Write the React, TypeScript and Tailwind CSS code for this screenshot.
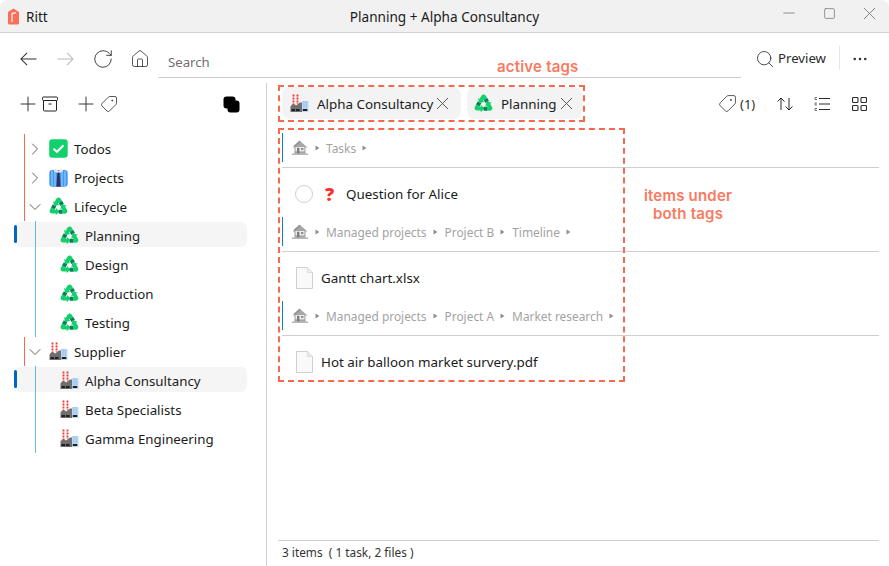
import React, { JSX } from 'react';
import { ChevronDown, ChevronRight, Ellipsis, House, Minus, Plus, RotateCw, Search, Square, Tag, X } from 'lucide-react';

const FONT = '[font-family:"Noto_Sans",sans-serif]';

const RecycleIcon = ({ size = 19 }: { size?: number }): JSX.Element => {
  const arm = (
    <g>
      <path d="M4.5 13L6.3 9.9" stroke="#0c7a5d" strokeWidth="3.8" fill="none" />
      <path d="M4.8 12.6L3.4 15Q3 15.8 4 15.8H7.8" stroke="#12d16c" strokeWidth="3.6" fill="none" strokeLinejoin="round" />
      <path d="M7.4 12.2V19.4L11 15.8Z" fill="#12d16c" />
    </g>
  );
  return (
    <svg width={size} height={size} viewBox="1 2 18 18" className="shrink-0">
      {arm}
      <g transform="rotate(120 10 11.83)">{arm}</g>
      <g transform="rotate(240 10 11.83)">{arm}</g>
    </svg>
  );
};

const FactoryIcon = (): JSX.Element => (
  <svg width="19" height="19" viewBox="0 0 19 19" className="shrink-0">
    <path d="M3.5 0.5V11M7.5 0.5V10" stroke="#f8312f" strokeWidth="1.8" strokeDasharray="2 1" fill="none" />
    <path d="M0.5 18V12.5L2 10.5H5L6 11.5L10 8.5L12 8.5V18Z" fill="#6f6f6f" />
    <rect x="12" y="7" width="6.5" height="11" fill="#bcd8f5" />
    <path d="M14 7V14M16.3 7V14" stroke="#8fbbe8" strokeWidth="0.8" />
    <rect x="1.5" y="15" width="3.5" height="2" fill="#1f1f1f" />
    <rect x="6" y="15" width="3.5" height="2" fill="#1f1f1f" />
    <rect x="12.8" y="15" width="4.5" height="2" fill="#1f1f1f" />
  </svg>
);

const CheckIcon = (): JSX.Element => (
  <svg width="19" height="19" viewBox="0 0 19 19" className="shrink-0">
    <rect width="18.5" height="18.5" x="0.2" y="0.2" rx="3" fill="#12d16c" />
    <path d="M4.5 9.8L8 12.8L14.5 6.2" stroke="#fff" strokeWidth="2" fill="none" />
  </svg>
);

const ShirtIcon = (): JSX.Element => (
  <svg width="19" height="19" viewBox="0 0 19 19" className="shrink-0">
    <rect x="0.3" y="2" width="18.4" height="16.8" rx="3" fill="#3f9bf2" />
    <path d="M3 3V18M6 3V18M13 3V18M16 3V18" stroke="#a5d0f8" strokeWidth="1" />
    <path d="M5.5 0.5L9.5 3L13.5 0.5L14 3.5L9.5 5.5L5 3.5Z" fill="#e4e4e8" />
    <path d="M8.4 4.5H10.6L11.6 18.8H7.4Z" fill="#35305f" />
  </svg>
);

const GrayHouse = (): JSX.Element => (
  <svg width="16" height="15" viewBox="0 0 16 15" className="shrink-0">
    <path d="M0.5 7.5L8 1L15.5 7.5H13.5V14H2.5V7.5Z" fill="#a6a6a6" />
    <path d="M8 1L2 6.5" stroke="#8a8a8a" strokeWidth="1.2" />
    <rect x="3.6" y="7" width="8.8" height="4.4" fill="#ececec" />
    <rect x="5" y="7.8" width="2.4" height="6.2" fill="#7e7e7e" />
    <rect x="9" y="8" width="2.4" height="2" fill="#8f8f8f" />
    <rect x="0" y="13.4" width="16" height="1.6" fill="#b8b8b8" />
  </svg>
);

const FileIcon = (): JSX.Element => (
  <svg width="17" height="22" viewBox="0 0 17 22" className="shrink-0">
    <path d="M0.5 0.5H11.5L16.5 5.5V21.5H0.5Z" fill="#f9f9f9" stroke="#cfcfcf" />
    <path d="M11.5 0.5V5.5H16.5" fill="#ececec" stroke="#dcdcdc" />
  </svg>
);

const Caret = (): JSX.Element => (
  <svg width="5" height="6" viewBox="0 0 5 6" className="shrink-0">
    <path d="M0.5 0.5L4.5 3L0.5 5.5Z" fill="#8f8f8f" />
  </svg>
);

type TreeRow = {
  label: string;
  icon: JSX.Element;
  child?: boolean;
  open?: boolean;
  active?: boolean;
};

const TREE: TreeRow[] = [
  { label: 'Todos', icon: <CheckIcon /> },
  { label: 'Projects', icon: <ShirtIcon /> },
  { label: 'Lifecycle', icon: <RecycleIcon />, open: true },
  { label: 'Planning', icon: <RecycleIcon />, child: true, active: true },
  { label: 'Design', icon: <RecycleIcon />, child: true },
  { label: 'Production', icon: <RecycleIcon />, child: true },
  { label: 'Testing', icon: <RecycleIcon />, child: true },
  { label: 'Supplier', icon: <FactoryIcon />, open: true },
  { label: 'Alpha Consultancy', icon: <FactoryIcon />, child: true, active: true },
  { label: 'Beta Specialists', icon: <FactoryIcon />, child: true },
  { label: 'Gamma Engineering', icon: <FactoryIcon />, child: true },
];

const Row = ({ row }: { row: TreeRow }): JSX.Element => (
  <div className="relative flex h-[29px] items-center text-[13.3px] text-[#1b1b1b]">
    {row.child ? (
      <span className="absolute top-0 bottom-0 left-[35px] w-px bg-[#6db7e4]" />
    ) : (
      <span className="absolute top-0 bottom-0 left-[24px] w-px bg-[#f4694f]" />
    )}
    {row.active && (
      <>
        <span className="absolute top-[1px] left-[14px] h-[25px] w-[233px] rounded-md bg-[#f5f5f5]" />
        <span className="absolute top-[4px] left-[14px] h-[18px] w-[3px] rounded-sm bg-[#0067c0]" />
        <span className="absolute top-0 bottom-0 left-[35px] w-px bg-[#6db7e4]" />
      </>
    )}
    {row.child ? (
      <div className="relative ml-[60px] flex items-center gap-[6px]">
        {row.icon}
        <span className="pt-[2px] leading-none">{row.label}</span>
      </div>
    ) : (
      <div className="relative ml-[25px] flex items-center">
        <span className="flex w-[24px] items-center">
          {row.open ? (
            <ChevronDown size={20} strokeWidth={1.1} color="#555" />
          ) : (
            <ChevronRight size={20} strokeWidth={1.1} color="#555" />
          )}
        </span>
        {row.icon}
        <span className="ml-[6px] pt-[2px] leading-none">{row.label}</span>
      </div>
    )}
  </div>
);

const Chip = ({ icon, label, box }: { icon: JSX.Element; label: string; box: string }): JSX.Element => (
  <div className={`flex h-[32px] items-center rounded-lg bg-[#f3f3f3] text-[13.4px] text-[#1b1b1b] ${box}`}>
    {icon}
    <span className="ml-[8px] pt-[3px] leading-none">{label}</span>
    <X size={21} strokeWidth={1} color="#444" className="-ml-[1px]" />
  </div>
);

const Crumbs = ({ parts }: { parts: string[] }): JSX.Element => (
  <div className="mr-[10px] flex h-[35px] flex-col border-b border-[#d0d0d0]">
    <div className="flex h-[29px] items-center border-l border-[#0a84d8] pl-[9px] text-[11.9px] text-[#a3a3a3]">
      <GrayHouse />
      <span className="mr-[6px] ml-[7px] flex">
        <Caret />
      </span>
      {parts.map((p) => (
        <React.Fragment key={p}>
          <span className="pt-[2px] leading-none">{p}</span>
          <span className="mr-[7px] ml-[6px] flex">
            <Caret />
          </span>
        </React.Fragment>
      ))}
    </div>
  </div>
);

const FileRow = ({ name }: { name: string }): JSX.Element => (
  <div className="flex h-[49px] items-center gap-[8px] pt-[3px] pl-[14px] text-[13.4px] text-[#1b1b1b]">
    <FileIcon />
    <span className="pt-[2px] leading-none">{name}</span>
  </div>
);

export default function App(): JSX.Element {
  return (
    <div className={`relative flex h-[566px] w-[889px] flex-col overflow-hidden bg-white ${FONT}`}>
      {/* Title bar */}
      <div className="grid h-[33px] shrink-0 grid-cols-[1fr_auto_1fr] items-center rounded-t-lg border-b border-[#d2d2d2] bg-[#f1f1f1] text-[13.6px] text-[#1b1b1b]">
        <div className="flex items-center">
          <svg width="13" height="17" viewBox="0 0 13 17" className="ml-[7px]">
            <path d="M6.5 0.5L12 4V15Q12 16.5 10.5 16.5H2.5Q1 16.5 1 15V4Z" fill="#f8705a" />
            <path d="M5 14V5.5Q7 4.6 9 5" stroke="#fff" strokeWidth="1.1" fill="none" />
          </svg>
          <span className="ml-[6px] pt-[2px] leading-none">Ritt</span>
        </div>
        <span className="pt-[2px] leading-none">Planning + Alpha Consultancy</span>
        <div className="flex h-[26px] items-center justify-end self-start text-[#777]">
          <span className="flex w-[40px] justify-center">
            <Minus size={18} strokeWidth={1.1} />
          </span>
          <span className="flex w-[40px] justify-center">
            <Square size={13} strokeWidth={1.4} />
          </span>
          <span className="flex w-[40px] justify-center">
            <X size={21} strokeWidth={1} />
          </span>
        </div>
      </div>

      {/* Toolbar */}
      <div className="flex h-[50px] shrink-0 items-start">
        <div className="flex h-[50px] w-[158px] shrink-0 items-center pt-[2px] pl-[20px] text-[#333]">
          <svg width="17" height="14" viewBox="0 0 18 14" fill="none" stroke="currentColor" strokeWidth="1.1">
            <path d="M17.5 7H1M7.5 0.5L1 7L7.5 13.5" />
          </svg>
          <svg width="17" height="14" viewBox="0 0 18 14" fill="none" stroke="#b8b8b8" strokeWidth="1.1" className="ml-[20px]">
            <path d="M0.5 7H17M10.5 0.5L17 7L10.5 13.5" />
          </svg>
          <RotateCw size={22} strokeWidth={1} className="ml-[18px]" />
          <House size={20} strokeWidth={1} className="ml-[16px]" />
        </div>
        <div className="flex h-[45px] w-[583px] items-end border-b border-[#cfcfcf] pb-[8px] pl-[10px] text-[13.2px] leading-none text-[#6f6f6f]">
          Search
        </div>
        <div className="flex items-center pt-[13px] text-[13.2px] text-[#2b2b2b]">
          <Search size={20} strokeWidth={1} className="mt-[2px] ml-[14px]" />
          <span className="ml-[3px] w-[53px] pt-[2px] leading-none">Preview</span>
          <span className="ml-[8px] h-[24px] w-px bg-[#e6e6e6]" />
          <Ellipsis size={18} strokeWidth={1.4} className="mt-[2px] ml-[11px]" />
        </div>
      </div>

      <div className="flex min-h-0 flex-1">
        {/* Sidebar */}
        <aside className="flex w-[266px] shrink-0 flex-col">
          <div className="mb-[9px] flex h-[42px] shrink-0 items-center pl-[16px] text-[#222]">
            <Plus size={24} strokeWidth={0.9} />
            <svg width="16" height="16" viewBox="0 0 16 16" fill="none" stroke="currentColor" strokeWidth="1" className="ml-[2px]">
              <rect x="0.5" y="1" width="15" height="3.5" rx="1" />
              <path d="M1.5 4.5V14Q1.5 15 2.5 15H13.5Q14.5 15 14.5 14V4.5M6.5 8H9.5" />
            </svg>
            <Plus size={24} strokeWidth={0.9} className="ml-[16px]" />
            <Tag size={18} strokeWidth={1} className="ml-[2px] -scale-x-100" />
            <svg width="17" height="17" viewBox="0 0 17 17" className="ml-[105px]">
              <rect x="0.5" y="0.5" width="12" height="12" rx="3" fill="#000" />
              <rect x="4.5" y="4.5" width="12" height="12" rx="3" fill="#000" />
            </svg>
          </div>
          {TREE.map((row) => (
            <Row key={row.label} row={row} />
          ))}
        </aside>

        {/* Main column */}
        <main className="flex min-w-0 flex-1 flex-col border-l border-[#d0d0d0]">
          <div className="flex h-[40px] shrink-0 items-center pl-[15px]">
            <div className="flex gap-[6px]">
              <Chip icon={<FactoryIcon />} label="Alpha Consultancy" box="w-[179px] pl-[8px]" />
              <Chip icon={<RecycleIcon />} label="Planning" box="w-[116px] pl-[7px]" />
            </div>
            <div className="ml-auto flex items-center pr-[22px] text-[#2b2b2b]">
              <Tag size={19} strokeWidth={1} className="-scale-x-100" />
              <span className="ml-[3px] w-[16px] pt-[2px] text-[13px] leading-none">(1)</span>
              <svg width="16" height="14" viewBox="0 0 16 14" fill="none" stroke="currentColor" strokeWidth="1" className="mt-[1px] ml-[21px]">
                <path d="M4 13V1M0.5 4.5L4 1L7.5 4.5M12 1V13M8.5 9.5L12 13L15.5 9.5" />
              </svg>
              <svg width="16" height="14" viewBox="0 0 16 14" fill="none" stroke="currentColor" strokeWidth="1" className="mt-[1px] ml-[21px]">
                <path d="M5 1.5H16M5 7H16M5 12.5H16" />
                <path d="M3 0.5H1V2.5H3M3 6H1V8H3M3 11.5H1V13.5H3" stroke="#777" />
              </svg>
              <svg width="15" height="14" viewBox="0 0 15 14" fill="none" stroke="currentColor" strokeWidth="1.1" className="mt-[1px] ml-[22px]">
                <rect x="0.5" y="0.5" width="5.5" height="5" rx="1" />
                <rect x="9" y="0.5" width="5.5" height="5" rx="1" />
                <rect x="0.5" y="8.5" width="5.5" height="5" rx="1" />
                <rect x="9" y="8.5" width="5.5" height="5" rx="1" />
              </svg>
            </div>
          </div>

          <div className="mt-[10px] flex flex-1 flex-col pl-[15px]">
            <Crumbs parts={['Tasks']} />
            <div className="flex h-[49px] items-start pt-[17px] pl-[13px] text-[13.4px] text-[#1b1b1b]">
              <span className="h-[18px] w-[18px] rounded-full border border-[#cfcfcf]" />
              <span className="ml-[12px] w-[14px] text-[18px] leading-[18px] font-black text-[#f8312f]">?</span>
              <span className="ml-[7px] leading-[18px]">Question for Alice</span>
            </div>
            <Crumbs parts={['Managed projects', 'Project B', 'Timeline']} />
            <FileRow name="Gantt chart.xlsx" />
            <Crumbs parts={['Managed projects', 'Project A', 'Market research']} />
            <FileRow name="Hot air balloon market survery.pdf" />
          </div>

          <div className="mr-[10px] ml-[11px] flex h-[26px] shrink-0 items-center border-t border-[#d0d0d0] pb-[1px] pl-[4px] text-[11.85px] whitespace-pre text-[#333]">
            3 items  ( 1 task, 2 files )
          </div>
        </main>
      </div>

      {/* Annotations drawn over the screenshot */}
      <div className="pointer-events-none absolute top-[85px] left-[278px] h-[37px] w-[307px] border-2 border-dashed border-[#f4694f]" />
      <div className="pointer-events-none absolute top-[128px] left-[278px] h-[254px] w-[347px] border-2 border-dashed border-[#f4694f]" />
      <span className="absolute top-[58px] left-[497px] text-[15px] leading-[18px] font-semibold tracking-[0.2px] text-[#f97a60] [font-family:Inter,sans-serif] [text-shadow:0_0_2px_#fff]">
        active tags
      </span>
      <div className="absolute top-[187px] left-[630px] w-[116px] text-center text-[15px] leading-[18px] font-semibold tracking-[0.2px] text-[#f97a60] [font-family:Inter,sans-serif]">
        items under
        <br />
        both tags
      </div>
    </div>
  );
}
